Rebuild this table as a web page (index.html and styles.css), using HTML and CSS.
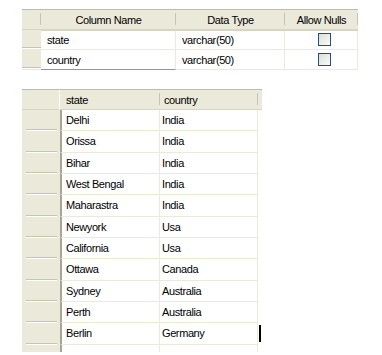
FILE: index.html
```html
<!DOCTYPE html>
<html lang="en">
<head>
    <meta charset="UTF-8">
    <title>Table design</title>
    <link rel="stylesheet" href="styles.css">
</head>
<body>
    <div class="design-grid">
        <div class="hd corner"></div>
        <div class="hd center">Column Name</div>
        <div class="hd center">Data Type</div>
        <div class="hd center">Allow Nulls</div>

        <div class="rh"></div>
        <div class="cell">state</div>
        <div class="cell">varchar(50)</div>
        <div class="cell check"><span class="box"></span></div>

        <div class="rh"></div>
        <div class="cell editing">country</div>
        <div class="cell">varchar(50)</div>
        <div class="cell check"><span class="box"></span></div>
    </div>

    <div class="result-wrap">
        <div class="result-grid" id="result">
            <div class="hd corner"></div>
            <div class="hd first">state</div>
            <div class="hd">country</div>
            <div class="hd tail"></div>
        </div>
        <span class="caret"></span>
    </div>

    <script>
        const rows = [
            ['Delhi', 'India'],
            ['Orissa', 'India'],
            ['Bihar', 'India'],
            ['West Bengal', 'India'],
            ['Maharastra', 'India'],
            ['Newyork', 'Usa'],
            ['California', 'Usa'],
            ['Ottawa', 'Canada'],
            ['Sydney', 'Australia'],
            ['Perth', 'Australia'],
            ['Berlin', 'Germany']
        ];
        const grid = document.getElementById('result');

        function addRow(values, cls) {
            const rh = document.createElement('div');
            rh.className = 'rh ' + cls;
            grid.appendChild(rh);
            values.forEach((v, i) => {
                const c = document.createElement('div');
                c.className = 'cell ' + cls + (i === 0 ? ' first' : '');
                c.textContent = v;
                grid.appendChild(c);
            });
            const gap = document.createElement('div');
            gap.className = 'blank ' + cls;
            grid.appendChild(gap);
        }

        rows.forEach(r => addRow(r, 'row'));
        addRow(['', ''], 'filler');
    </script>
</body>
</html>
```

FILE: styles.css
```css
body {
    margin: 0;
    background: #fff;
    font-family: 'Liberation Sans', Arial, sans-serif;
    font-size: 11px;
    letter-spacing: -0.4px;
    color: #000;
}

/* shared header look (XP style) */
.hd {
    background: #ebe9da;
    border-bottom: 2px solid #d8d5c4;
    height: 20px;
    box-sizing: border-box;
    display: flex;
    align-items: center;
    position: relative;
    white-space: nowrap;
}
.hd::after {
    content: '';
    position: absolute;
    right: 0;
    top: 3px;
    bottom: 4px;
    width: 1px;
    background: #c7c5b2;
    box-shadow: 1px 0 0 #fff;
}
.hd.center {
    justify-content: center;
}
.hd.tail::after {
    display: none;
}

.cell {
    background: #fff;
    box-sizing: border-box;
    display: flex;
    align-items: center;
    white-space: nowrap;
    border-right: 1px solid #ecead9;
    border-bottom: 1px solid #ecead9;
}
.rh {
    background: #ebe9da;
    position: relative;
}
.rh::after {
    content: '';
    position: absolute;
    left: 0;
    right: 0;
    bottom: 0;
    height: 1px;
    background: #c6c3b1;
    box-shadow: 0 1px 0 #fff;
}

/* top: table designer */
.design-grid {
    margin: 9px 0 0 22px;
    width: 336px;
    display: grid;
    grid-template-columns: 19px 135px 109px 73px;
    grid-auto-rows: 20px;
    border-top: 1px solid #a9bcdc;
}
.design-grid .hd {
    height: 21px;
}
.design-grid .rh::after {
    bottom: 2px;
}
.design-grid .cell {
    padding-left: 6px;
}
.design-grid .cell.editing {
    border-bottom: 1px solid #7f9db9;
}
.check {
    justify-content: center;
    padding-left: 0 !important;
}
.box {
    width: 11px;
    height: 11px;
    border: 1px solid #1c5180;
    background: linear-gradient(135deg, #dcdcd7, #fbfbf9);
    margin-left: 6px;
}

/* bottom: query results */
.result-wrap {
    position: relative;
    margin: 19px 0 0 22px;
    width: 240px;
}
.result-grid {
    display: grid;
    grid-template-columns: 38px 100px 98px 4px;
    grid-template-rows: 20px;
    grid-auto-rows: 21.33px;
    border-top: 1px solid #a9bcdc;
}
.result-grid .hd {
    padding-left: 4px;
    border-bottom-width: 1px;
}
.result-grid .hd.corner {
    border-right: 1px solid #fff;
}
.result-grid .hd.corner::after {
    display: none;
}
.result-grid .hd.first {
    padding-left: 6px;
}
.result-grid .rh::after {
    left: 4px;
    right: 3px;
    bottom: 1px;
}
.result-grid .rh.filler::after {
    display: none;
}
.result-grid .cell {
    padding-left: 2px;
}
.result-grid .cell.first {
    padding-left: 4px;
    border-left: 2px solid #a8a592;
}
.result-grid .filler {
    height: 7px;
    border-bottom: none;
}
.blank {
    background: #fff;
}
.caret {
    position: absolute;
    left: 237px;
    top: 236px;
    width: 2px;
    height: 17px;
    background: #000;
}
```
